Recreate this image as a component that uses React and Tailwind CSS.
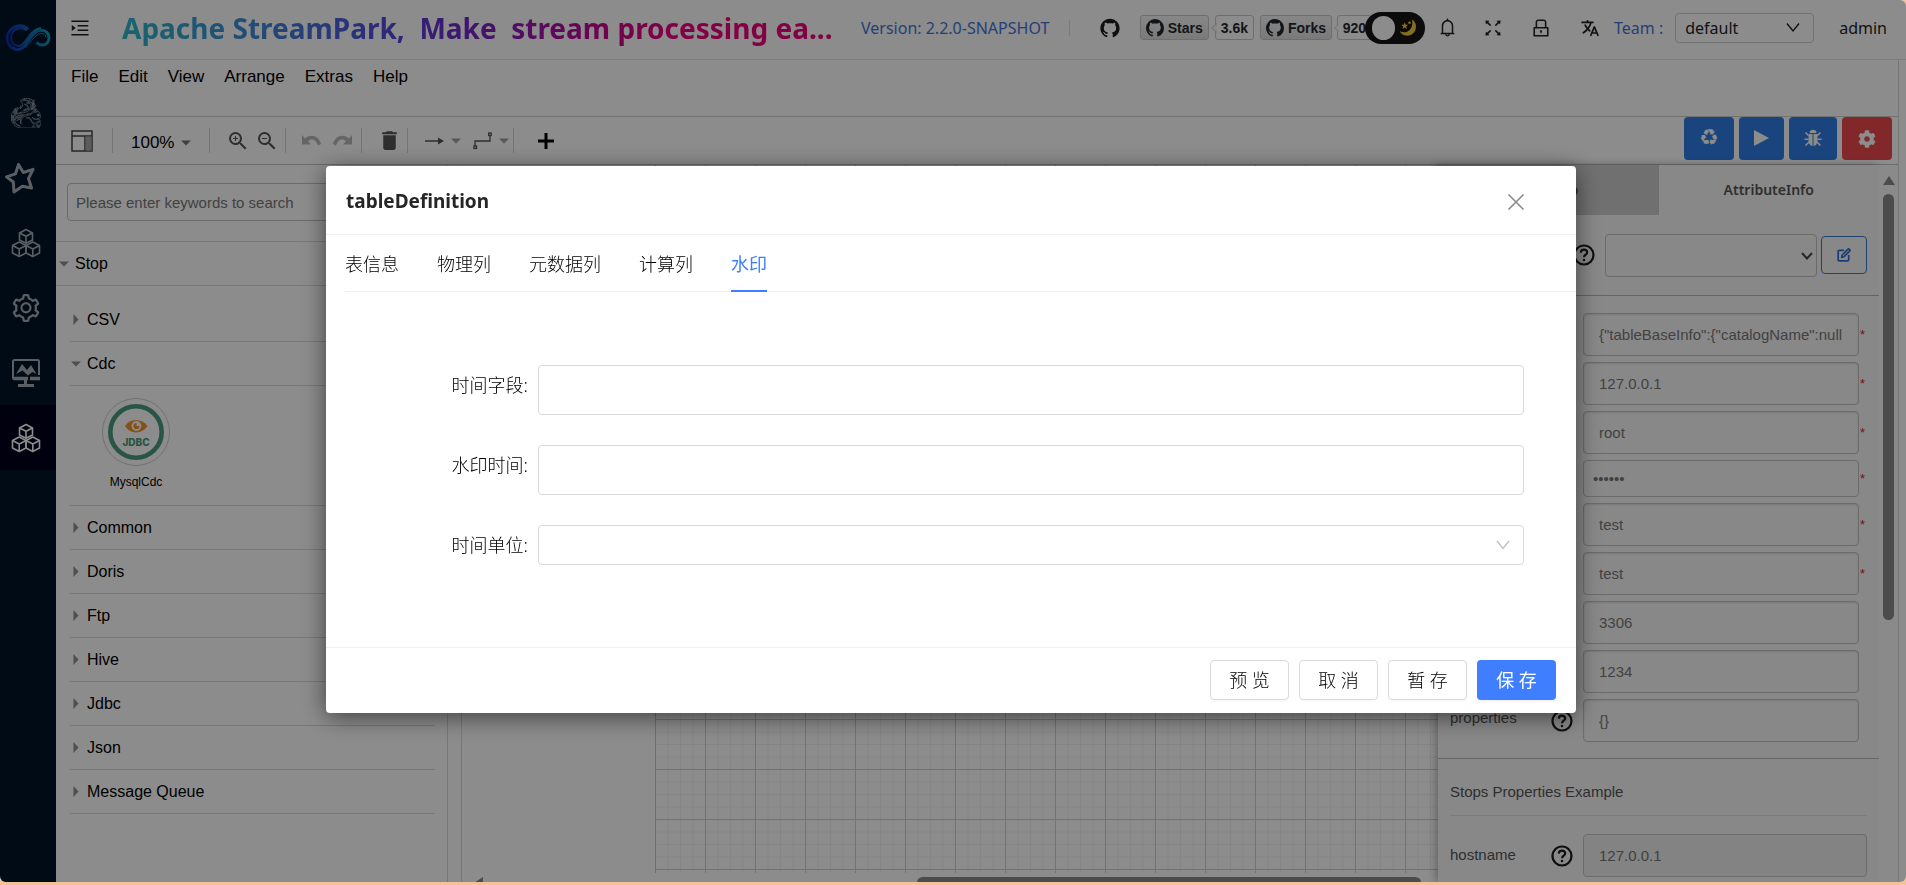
import React, { useState } from "react";
import {
  AiOutlineMenuUnfold,
  AiOutlineBell,
  AiOutlineFullscreen,
  AiOutlineLock,
  AiOutlineSetting,
  AiFillGithub,
} from "react-icons/ai";
import { IoLanguage } from "react-icons/io5";
import { SiApacheflink } from "react-icons/si";
import { VscGithubInverted } from "react-icons/vsc";
import { FaCog } from "react-icons/fa";
import { MdDelete, MdZoomIn, MdZoomOut } from "react-icons/md";
import { FiEdit } from "react-icons/fi";

const UI = "font-['Noto_Sans','Noto_Sans_CJK_SC',sans-serif]";
const ARIAL = "font-['Liberation_Sans','Noto_Sans_CJK_SC',sans-serif]";

function StreamLogo() {
  return (
    <svg viewBox="0 0 46 28" className="h-7 w-[46px]" fill="none">
      <defs>
        <linearGradient id="logo" x1="0" y1="0" x2="1" y2="0">
          <stop offset="0" stopColor="#1030b8" />
          <stop offset="0.45" stopColor="#1658b8" />
          <stop offset="1" stopColor="#109cb4" />
        </linearGradient>
      </defs>
      <path
        d="M23 5.500C20 2.200 16.500 1.500 13.500 2C7 3 2.500 7.500 2.500 14C2.500 21 7.500 25.500 13.500 25.500C23 25.500 24 8 36 6.500C41 6 44 9.500 44 13.500C44 18 41 21 37 21C34.500 21 33 20 31.500 18.500"
        stroke="url(#logo)"
        strokeWidth="3"
      />
      <path
        d="M22 6.500C19 4 16 4 14 4.500C9 5.500 6 9 6 14C6 19 9.500 22 14 22C21.500 22 23 6 36 4"
        stroke="url(#logo)"
        strokeWidth="2"
      />
      <path d="M20 24C26 20 28 11 36 9.500C39 9 41 11 41 13.500" stroke="#0f86b8" strokeWidth="1" />
      <path d="M17 26C26 22 26 10 36 7.700M4 11C3 16 4 20 7 23M5 9C4 16 6 21 12 24" stroke="#001529" strokeWidth="0.700" />
    </svg>
  );
}

function StarIcon() {
  return (
    <svg viewBox="0 0 32 32" className="mr-3 h-8 w-8" fill="none" stroke="currentColor" strokeWidth="3" strokeLinejoin="round">
      <path d="M14.500 2.500L19.300 10.500L29 7.300L24.500 16.500L27.500 26L18.300 24.300L10 30L9.300 20L2.500 14.800L11.500 11.800Z" />
    </svg>
  );
}

function CubesIcon() {
  return (
    <svg viewBox="0 0 30 30" className="h-[30px] w-[30px]" fill="none" stroke="currentColor" strokeWidth="1.600" strokeLinejoin="round">
      <path d="M15 1.500L21.500 5V12L15 15.300L8.500 12V5Z" />
      <path d="M8.500 5L15 8.300L21.500 5M15 8.300V15" />
      <path d="M8.200 14L15 17.500V25L8.200 28.500L1.500 25V17.500Z" />
      <path d="M1.500 17.500L8.200 21L15 17.500M8.200 21V28.500" />
      <path d="M21.800 14L28.500 17.500V25L21.800 28.500L15 25V17.500Z" />
      <path d="M15 17.500L21.800 21L28.500 17.500M21.800 21V28.500" />
    </svg>
  );
}

function MonitorIcon() {
  return (
    <svg viewBox="0 0 30 30" className="h-[30px] w-[30px]" fill="none" stroke="currentColor" strokeWidth="2">
      <path d="M28 17V3.500Q28 2 26.500 2H3.500Q2 2 2 3.500V19.500Q2 21 3.500 21H17" />
      <path d="M5 16L11 6L16 12L20 7L25.500 16L21.500 14L17 17.500L11.500 12.500Z" fill="currentColor" stroke="none" />
      <path d="M19 20.500H29M2.500 20.500H17" strokeWidth="3.500" />
      <path d="M14.500 22V27" strokeWidth="3" />
      <path d="M7 27.500H23" strokeWidth="3" />
    </svg>
  );
}

function HelpIcon({ className = "" }) {
  return (
    <svg viewBox="0 0 22 22" className={"h-[22px] w-[22px] shrink-0 " + className} fill="none" stroke="#1c1c1c" strokeWidth="2.200">
      <circle cx="11" cy="11" r="9.500" />
      <path d="M7.800 8.600C7.900 6.600 9.300 5.600 11 5.600C12.800 5.600 14.200 6.700 14.200 8.400C14.200 10.600 11 10.600 11 13.200" />
      <path d="M11 14.900V17.100" />
    </svg>
  );
}

function Caret({ open }) {
  return open ? (
    <svg viewBox="0 0 10 6" className="h-[6px] w-[10px] shrink-0" fill="#909090"><path d="M0 0.500H10L5 5.500Z" /></svg>
  ) : (
    <svg viewBox="0 0 6 11" className="mx-[2px] h-[11px] w-[6px] shrink-0" fill="#909090"><path d="M0.500 0V11L5.500 5.500Z" /></svg>
  );
}

function DropArrow({ dark }) {
  return (
    <svg viewBox="0 0 10 6" className="h-[6px] w-[10px]" fill={dark ? "#777" : "#a0a0a0"}><path d="M0 0.500H10L5 5.500Z" /></svg>
  );
}

function Chevron({ className }) {
  return (
    <svg viewBox="0 0 14 10" className={"pointer-events-none absolute " + className} fill="none" stroke="currentColor" strokeWidth="1.400">
      <path d="M1 1L7 8.500L13 1" />
    </svg>
  );
}

const navItems = [
  { label: "Flink", icon: <SiApacheflink size={30} fill="none" stroke="currentColor" strokeWidth="0.5" /> },
  { label: "Spark", icon: <StarIcon /> },
  { label: "Resource", icon: <CubesIcon /> },
  { label: "Settings", icon: <AiOutlineSetting size={32} /> },
  { label: "System", icon: <MonitorIcon /> },
  { label: "Pipeline", icon: <CubesIcon />, active: true },
];

function Sidebar() {
  return (
    <nav className="flex w-14 shrink-0 flex-col bg-[#001529] text-[#a6adb4]">
      <a href="#home" aria-label="Home" className="flex h-20 justify-center pt-6">
        <StreamLogo />
      </a>
      {navItems.map((n) => (
        <a
          key={n.label}
          href={"#" + n.label.toLowerCase()}
          aria-label={n.label}
          className={n.active ? "flex h-[65px] items-center justify-center bg-[#00001a] pr-1 text-white" : "flex h-[65px] items-center justify-center pr-1"}
        >
          {n.icon}
        </a>
      ))}
    </nav>
  );
}

function GhBadge({ label, count }) {
  return (
    <div className="flex items-center text-[14px] font-bold leading-none text-[#24292f]">
      <a href={"#" + label.toLowerCase()} className="flex h-[25px] items-center gap-1 rounded-[3px] border border-[#c8c8c8] bg-linear-to-b from-[#f6f6f6] to-[#dedede] px-[5px]">
        <VscGithubInverted size={18} />
        {label}
      </a>
      <svg viewBox="0 0 7 10" className="z-10 -mr-[2px] ml-px h-[10px] w-[7px]" fill="#fafafa" stroke="#c8c8c8">
        <path d="M7 0.500L1.500 5L7 9.500" />
      </svg>
      <a href={"#" + label.toLowerCase() + "-count"} className="flex h-[25px] items-center rounded-[3px] border border-[#c8c8c8] px-[5px]">
        {count}
      </a>
    </div>
  );
}

function Header() {
  return (
    <header className={"flex h-[60px] shrink-0 items-center border-b border-[#e4e4e4] " + UI}>
      <div className="flex min-w-0 flex-1 items-center pb-1">
        <button aria-label="Toggle menu" className="ml-[13px] w-[22px] text-[#1f1f1f]"><AiOutlineMenuUnfold size={22} /></button>
        <h1 className="ml-[31px] w-[718px] shrink-0 whitespace-pre bg-[linear-gradient(90deg,#30b8c8_0%,#3d86d8_20%,#5546e0_38%,#7a22c4_50%,#d80088_70%,#f0007f_78%)] bg-clip-text text-[28px] font-bold leading-[44px] text-transparent">
          {"Apache StreamPark,  Make  stream processing ea..."}
        </h1>
        <span className="ml-[21px] whitespace-nowrap text-[16px] text-[#3f76d8]">Version: 2.2.0-SNAPSHOT</span>
        <span className="ml-5 h-4 w-px bg-[#e0e0e0]" />
      </div>
      <div className="flex items-center pb-1">
        <a href="#github" aria-label="GitHub" className="mr-[19px] text-[#1c1c1c]"><AiFillGithub size={22} /></a>
        <div className={"flex items-center gap-[6px] " + ARIAL}>
          <GhBadge label="Stars" count="3.6k" />
          <div className="w-28 shrink-0"><GhBadge label="Forks" count="920" /></div>
        </div>
        <button role="switch" aria-checked="true" aria-label="Dark mode" className="z-10 -ml-[7px] flex h-8 w-[60px] shrink-0 items-center rounded-full bg-[#151515] px-[7px]">
          <span className="h-6 w-6 rounded-full bg-white" />
          <svg viewBox="0 0 20 20" className="ml-1 h-5 w-5" fill="#f5c837">
            <path d="M13.500 1C17 3 18.500 7 17.500 11C16 17 9 20 3.500 16.500C2 15.500 1.300 14.500 1 13.500C5 15.500 9.500 14.500 12 11C14.200 7.800 14.500 4 13.500 1Z" />
            <path d="M6 4L7 6.500L9.500 6.700L7.600 8.300L8.200 11L6 9.500L3.800 11L4.400 8.300L2.500 6.700L5 6.500Z" />
            <circle cx="11" cy="4.500" r="1.300" />
          </svg>
        </button>
        <div className="ml-3 flex items-center gap-6 text-[#1f1f1f]">
          <button aria-label="Notifications"><AiOutlineBell size={21} /></button>
          <button aria-label="Full screen"><AiOutlineFullscreen size={22} /></button>
          <button aria-label="Lock" className="ml-[2px]"><AiOutlineLock size={22} /></button>
          <button aria-label="Language" className="ml-1"><IoLanguage size={20} /></button>
        </div>
        <label htmlFor="team" className="ml-[14px] whitespace-nowrap text-[16px] text-[#3f76d8]">Team :</label>
        <div className="relative ml-3 text-[#1f1f1f]">
          <select id="team" className="h-[30px] w-[139px] appearance-none rounded-[4px] border border-[#d0d0d0] bg-transparent px-[9px] text-[16px] leading-6">
            <option>default</option>
          </select>
          <Chevron className="right-[14px] top-[9px] h-[11px] w-[14px]" />
        </div>
        <button className="ml-[25px] mr-[19px] text-[16px] text-[#1f1f1f]">admin</button>
      </div>
    </header>
  );
}

const Sep = ({ className }) => <span className={"h-[25px] w-px bg-[#d5d5d5] " + className} />;

function RecycleIcon() {
  return <span aria-hidden="true" className="font-['DejaVu_Sans',sans-serif] text-[22px] leading-none">{"\u267B\uFE0E"}</span>;
}

function BugIcon() {
  return (
    <svg viewBox="0 0 18 18" className="h-[18px] w-[18px]" fill="currentColor">
      <path d="M5.500 4C5.500 2 7 0.800 9 0.800S12.500 2 12.500 4Z" />
      <path d="M4.500 5H8.500V17C6 16.700 4.500 14.500 4.500 12ZM9.500 5H13.500V12C13.500 14.500 12 16.700 9.500 17Z" />
      <path d="M1.500 3.500L4.500 6.500M0.500 10.200H4.500M1.500 16.500L5 13M16.500 3.500L13.500 6.500M17.500 10.200H13.500M16.500 16.500L13 13" stroke="currentColor" strokeWidth="1.500" />
    </svg>
  );
}

function Toolbar() {
  const blue = "flex h-[43px] items-center justify-center rounded-[4px] bg-[#2f7ce6] pb-[2px] text-white";
  return (
    <div className="flex h-12 shrink-0 border-b border-[#c4c4c4]">
      <div className="flex flex-1 items-center pl-[15px]">
        <button aria-label="Format panel">
          <svg viewBox="0 0 22 22" className="h-[22px] w-[22px]" fill="none" stroke="#444" strokeWidth="1.500">
            <rect x="1" y="1" width="20" height="20" />
            <path d="M1 6H21M14 6V21" />
            <rect x="14.500" y="6.500" width="6" height="14" fill="#a8a8a8" stroke="none" />
          </svg>
        </button>
        <Sep className="ml-[19px]" />
        <button className="ml-[18px] flex items-center gap-[7px] pt-1 text-[17px] text-black">100% <DropArrow dark /></button>
        <Sep className="ml-[18px]" />
        <button aria-label="Zoom in" className="ml-4 text-[#555]"><MdZoomIn size={24} /></button>
        <button aria-label="Zoom out" className="ml-[5px] text-[#555]"><MdZoomOut size={24} /></button>
        <Sep className="ml-[6px]" />
        <button aria-label="Undo" className="ml-4">
          <svg viewBox="0 0 19 12" className="h-3 w-[19px]" fill="#b9b9b9"><path d="M0 0L3 3.500C8 -1.500 17 0 19 9L16 10.500C14 4 9 3 6 6L9 9.500H0Z" /></svg>
        </button>
        <button aria-label="Redo" className="ml-3">
          <svg viewBox="0 0 19 12" className="h-3 w-[19px]" fill="#b9b9b9"><path d="M19 0L16 3.500C11 -1.500 2 0 0 9L3 10.500C5 4 10 3 13 6L10 9.500H19Z" /></svg>
        </button>
        <Sep className="ml-[9px]" />
        <button aria-label="Delete" className="ml-[15px] text-[#555]"><MdDelete size={25} /></button>
        <Sep className="ml-[5px]" />
        <button aria-label="Connection" className="ml-[17px] flex items-center gap-[7px]">
          <svg viewBox="0 0 19 8" className="h-2 w-[19px]" fill="#555"><path d="M0 3.300H13V0.500L19 4L13 7.500V4.700H0Z" /></svg>
          <DropArrow />
        </button>
        <button aria-label="Waypoints" className="ml-3 flex items-center gap-[7px]">
          <svg viewBox="0 0 19 19" className="h-[19px] w-[19px]" fill="none" stroke="#555" strokeWidth="1.300"><path d="M2 15V10H17V5" /><rect x="1" y="15" width="2.500" height="2.500" /><rect x="15.700" y="2" width="2.500" height="2.500" /></svg>
          <DropArrow />
        </button>
        <Sep className="ml-1" />
        <button aria-label="Insert" className="ml-6">
          <svg viewBox="0 0 16 16" className="h-4 w-4" fill="none" stroke="#000" strokeWidth="3"><path d="M8 0V16M0 8H16" /></svg>
        </button>
      </div>
      <div className="flex gap-[5px] pr-[6px]">
        <button aria-label="Refresh" className={blue + " w-[50px]"}><RecycleIcon /></button>
        <button aria-label="Run" className={blue + " w-[45px]"}>
          <svg viewBox="0 0 15 16" className="h-4 w-[15px]" fill="currentColor"><path d="M0 0L15 8L0 16Z" /></svg>
        </button>
        <button aria-label="Debug" className={blue + " w-12"}><BugIcon /></button>
        <button aria-label="Settings" className="flex h-[43px] w-[50px] items-center justify-center rounded-[4px] bg-[#ee4a4e] text-white"><FaCog size={18} /></button>
      </div>
    </div>
  );
}

function GroupRow({ name, open }) {
  return (
    <button className="flex h-11 w-full items-center gap-[6px] border-b border-[#dadada] pl-px text-left text-[16px] text-black">
      <Caret open={open} />
      {name}
    </button>
  );
}

function StopsPanel() {
  return (
    <aside className="flex w-[392px] shrink-0 flex-col border-r border-[#dadada]">
      <div className="border-b border-[#dadada] px-[11px] pb-5 pt-[18px]">
        <input aria-label="Search" placeholder="Please enter keywords to search" className="h-[38px] w-full rounded-[4px] border border-[#c4c4c4] px-2 text-[15px] placeholder:text-[#777]" />
      </div>
      <button className="flex h-11 items-center gap-[6px] border-b border-[#dadada] pl-[3px] text-left text-[16px] text-black">
        <Caret open /> Stop
      </button>
      <div className="pl-[14px] pr-3 pt-3">
        <GroupRow name="CSV" />
        <GroupRow name="Cdc" open />
        <div className="h-[120px] border-b border-[#dadada] pl-8 pt-3">
          <button className="flex w-[68px] flex-col items-center">
            <svg viewBox="0 0 68 68" className="h-[68px] w-[68px]">
              <circle cx="34" cy="34" r="33.500" fill="#fff" stroke="#cfcfcf" />
              <circle cx="34" cy="34" r="25.700" fill="#fff" stroke="#4a9c7c" strokeWidth="4.600" />
              <path d="M23 28C28 20 40 20 45.500 28C40 36.500 28 36.500 23 28Z" fill="#f0952d" />
              <circle cx="34.500" cy="28" r="4" fill="none" stroke="#fff" strokeWidth="1.800" />
              <path d="M34.500 28V24.500A3.500 3.500 0 0 1 38 28Z" fill="#fff" />
              <text x="34" y="48" textAnchor="middle" fontFamily="Inter, sans-serif" fontWeight="800" fontSize="10" fill="#4a9c7c">JDBC</text>
            </svg>
            <span className="mt-2 text-[12px] leading-4 text-black">MysqlCdc</span>
          </button>
        </div>
        {["Common", "Doris", "Ftp", "Hive", "Jdbc", "Json", "Message Queue"].map((n) => (
          <GroupRow key={n} name={n} />
        ))}
      </div>
    </aside>
  );
}

function Canvas() {
  return (
    <section className="ml-[13px] flex min-w-0 flex-1 flex-col border-l border-[#dadada]">
      <div className="ml-[193px] flex-1 border-l border-[#c8c8c8] bg-[linear-gradient(#cfcfcf_1px,transparent_1px),linear-gradient(90deg,#cfcfcf_1px,transparent_1px),linear-gradient(#f2f2f2_1px,transparent_1px),linear-gradient(90deg,#f2f2f2_1px,transparent_1px)] bg-[size:50px_50px,50px_50px,12.5px_12.5px,12.5px_12.5px] bg-[position:0_4px,-1px_0,0_4px,-1px_0]" />
      <div className="flex h-[9px] shrink-0 overflow-hidden pl-3 pt-1">
        <svg viewBox="0 0 9 12" className="h-3 w-[9px]" fill="#8a8a8a"><path d="M9 0V12L0 6Z" /></svg>
        <span className="ml-auto mr-[17px] h-[11px] w-[504px] rounded-full bg-[#8a8a8a]" />
      </div>
    </section>
  );
}

const props = [
  { id: "tableDefinition", value: '{"tableBaseInfo":{"catalogName":null', req: true },
  { id: "hostname", value: "127.0.0.1", req: true },
  { id: "username", value: "root", req: true },
  { id: "password", value: "secret", req: true, pw: true },
  { id: "databaseName", value: "test", req: true },
  { id: "tableName", value: "test", req: true },
  { id: "port", value: "3306" },
  { id: "serverId", value: "1234" },
  { id: "properties", value: "{}" },
];

function AttributePanel() {
  const field = "min-w-0 flex-1 rounded-[4px] border border-[#c4c4c4] text-[15px] text-[#777] ";
  return (
    <>
      <aside className="z-10 flex w-[441px] shrink-0 flex-col overflow-hidden bg-[#f8f8f8] text-[15px] text-[#555] shadow-[-2px_0_8px_rgba(0,0,0,0.3)]">
        <div className={"flex h-[50px] shrink-0 text-[14px] font-semibold text-[#555] " + UI}>
          <button className="flex-1 bg-[#cdcdcd] pb-[2px]">BaseInfo</button>
          <button className="flex-1 pb-[2px]">AttributeInfo</button>
        </div>
        <div className="flex h-[81px] shrink-0 items-center border-b border-[#b8b8b8] pl-[135px] pr-3">
          <HelpIcon />
          <div className="relative ml-[10px] flex-1">
            <select aria-label="Datasource" className="block h-[43px] w-full appearance-none rounded-[4px] border border-[#c4c4c4] bg-transparent"><option></option></select>
            <svg viewBox="0 0 12 8" className="pointer-events-none absolute right-1 top-[18px] h-2 w-3" fill="none" stroke="#444" strokeWidth="2"><path d="M1 1L6 6.500L11 1" /></svg>
          </div>
          <button aria-label="Edit datasource" className="ml-1 flex h-[38px] w-[46px] items-center justify-center rounded-[4px] border border-[#3b7ad9] text-[#2f72d8]"><FiEdit size={14} strokeWidth={3} /></button>
        </div>
        <div className="flex shrink-0 flex-col gap-[6px] border-b border-[#b8b8b8] pb-4 pl-3 pr-[13px] pt-[17px]">
          {props.map((p) => (
            <div key={p.id} className="flex items-center">
              <label htmlFor={p.id} className="w-[101px] pb-1">{p.id}</label>
              <HelpIcon className="mr-[10px]" />
              <input
                id={p.id}
                type={p.pw ? "password" : "text"}
                defaultValue={p.value}
                className={field + (p.pw ? "h-[37px] px-[9px]" : "h-[43px] px-[15px] shadow-[inset_0_1px_2px_rgba(0,0,0,0.12)]")}
              />
              <span className="w-[7px] pl-px text-[13px] leading-none text-[#e02020]">{p.req ? "*" : ""}</span>
            </div>
          ))}
        </div>
        <div className="shrink-0 px-3 pt-[22px]">
          <h2 className="border-b border-[#e0e0e0] pb-3 leading-[22px]">Stops Properties Example</h2>
          <div className="mt-[18px] flex items-center">
            <label htmlFor="ex-hostname" className="w-[101px]">hostname</label>
            <HelpIcon className="mr-[10px]" />
            <input id="ex-hostname" readOnly value="127.0.0.1" className={field + "h-[43px] bg-[#eeeeee] px-[15px]"} />
          </div>
        </div>
      </aside>
      <div className="z-10 flex w-[19px] shrink-0 flex-col items-center bg-[#fcfcfc] pt-[11px]">
        <svg viewBox="0 0 12 9" className="h-[9px] w-3" fill="#8a8a8a"><path d="M6 0L12 9H0Z" /></svg>
        <span className="mt-[9px] h-[426px] w-[11px] rounded-full bg-[#8a8a8a]" />
      </div>
    </>
  );
}

const tabs = ["表信息", "物理列", "元数据列", "计算列", "水印"];

function TableModal() {
  const [tab, setTab] = useState("水印");
  const label = "w-[212px] shrink-0 pr-[10px] text-right text-[18px] font-light leading-10 text-black";
  const box = "w-full rounded-[4px] border border-[#d9d9d9] bg-white px-3 text-[18px] ";
  const btn = "h-10 w-[79px] rounded-[4px] text-[18px] ";
  return (
    <div className="fixed inset-0 bottom-[3px] z-50 flex items-start justify-center rounded-b-[6px] rounded-tr-[6px] bg-black/45 pr-1 pt-[166px]">
      <div role="dialog" aria-labelledby="dlg-title" className={"w-[1250px] rounded-[4px] bg-white text-[#262626] shadow-[0_4px_24px_rgba(0,0,0,0.55)] " + UI}>
        <div className="flex h-[69px] items-center justify-between border-b border-[#f0f0f0] pl-5 pr-[51px] pt-[3px]">
          <h2 id="dlg-title" className="text-[19px] font-bold">tableDefinition</h2>
          <button aria-label="Close">
            <svg viewBox="0 0 18 18" className="h-[18px] w-[18px]" fill="none" stroke="#8c8c8c" strokeWidth="1.600"><path d="M1.500 1.500L16.500 16.500M16.500 1.500L1.500 16.500" /></svg>
          </button>
        </div>
        <div role="tablist" className="ml-[19px] flex h-[57px] gap-[38px] border-b border-[#f0f0f0]">
          {tabs.map((t) => (
            <button
              key={t}
              role="tab"
              aria-selected={t === tab}
              onClick={() => setTab(t)}
              className={
                t === tab
                  ? "h-[57px] border-b-2 border-[#3e7eff] pt-1 text-[18px] font-normal text-[#3e7eff]"
                  : "h-[57px] border-b-2 border-transparent pt-1 text-[18px] font-light text-black"
              }
            >
              {t}
            </button>
          ))}
        </div>
        <form className="flex flex-col gap-[30px] pb-[82px] pr-[52px] pt-[73px]">
          <div className="flex">
            <label htmlFor="f1" className={label}>时间字段:</label>
            <input id="f1" className={box + "h-[50px]"} />
          </div>
          <div className="flex">
            <label htmlFor="f2" className={label}>水印时间:</label>
            <input id="f2" className={box + "h-[50px]"} />
          </div>
          <div className="flex">
            <label htmlFor="f3" className={label}>时间单位:</label>
            <div className="relative flex-1">
              <select id="f3" className={box + "block h-10 appearance-none"}><option></option></select>
              <Chevron className="right-[14px] top-[15px] h-[10px] w-[14px] text-[#bfbfbf]" />
            </div>
          </div>
        </form>
        <div className="flex justify-end gap-[10px] border-t border-[#f0f0f0] px-5 pb-[13px] pt-3 font-light text-black">
          {["预 览", "取 消", "暂 存"].map((b) => (
            <button key={b} className={btn + "border border-[#d9d9d9] shadow-[0_2px_0_rgba(0,0,0,0.02)]"}>{b}</button>
          ))}
          <button className={btn + "bg-[#3e7eff] font-normal text-white shadow-[0_2px_0_rgba(0,0,0,0.04)]"}>保 存</button>
        </div>
      </div>
    </div>
  );
}

export default function App() {
  return (
    <div className={"h-screen overflow-hidden bg-[#f0c498] pb-[3px] " + ARIAL}>
      <div className="flex h-full overflow-hidden rounded-b-[6px] rounded-tr-[6px] bg-white">
        <Sidebar />
        <div className="flex min-w-0 flex-1 flex-col">
          <Header />
          <main className="mr-[7px] flex min-h-0 flex-1 flex-col border-r border-[#dadada]">
            <div className="flex h-[57px] shrink-0 items-start gap-5 border-b border-[#d0d0d0] pl-[15px] pt-1 text-[17px] leading-[26px] text-black">
              {["File", "Edit", "View", "Arrange", "Extras", "Help"].map((m) => (
                <button key={m}>{m}</button>
              ))}
            </div>
            <Toolbar />
            <div className="flex min-h-0 flex-1">
              <StopsPanel />
              <Canvas />
              <AttributePanel />
            </div>
          </main>
        </div>
      </div>
      <TableModal />
    </div>
  );
}
